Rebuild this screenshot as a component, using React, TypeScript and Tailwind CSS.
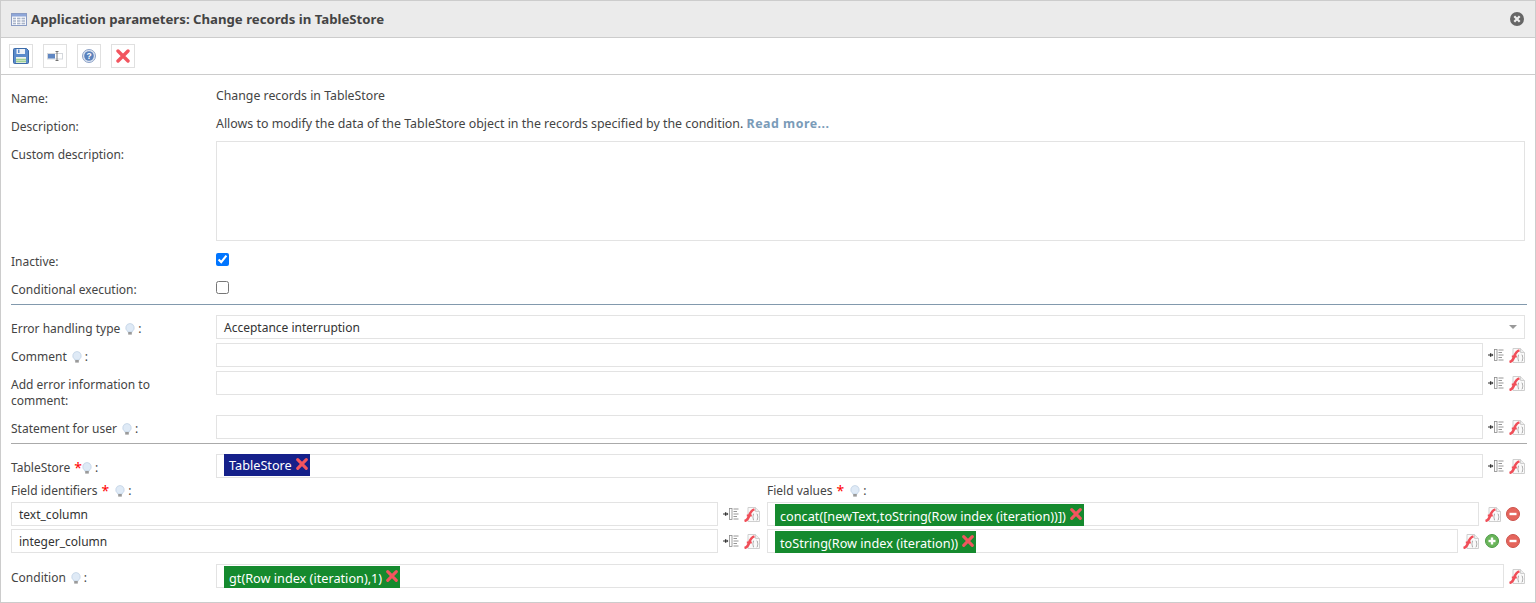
import React from "react";

function TableIcon() {
  return (
    <svg width="16" height="13" viewBox="0 0 16 13" className="shrink-0">
      <rect x="0.5" y="0.5" width="15" height="12" fill="#f4f6fb" stroke="#8a9cc4" />
      <rect x="1" y="1" width="14" height="2.5" fill="#8ea6d8" />
      <path d="M2 5.5h12M2 8h12M2 10.5h12" stroke="#a9b4c8" strokeWidth="1.4" />
      <path d="M5.5 4v8M10 4v8" stroke="#fff" strokeWidth="1" />
    </svg>
  );
}
function CloseIcon() {
  return (
    <svg width="14" height="14" viewBox="0 0 14 14">
      <circle cx="7" cy="7" r="7" fill="#666" />
      <path d="M4.3 4.3l5.4 5.4M9.7 4.3l-5.4 5.4" stroke="#eee" strokeWidth="2.2" />
    </svg>
  );
}
function SaveIcon() {
  return (
    <svg width="16" height="16" viewBox="0 0 16 16">
      <path d="M0.5 1.5a1 1 0 0 1 1-1h12l2 2v12a1 1 0 0 1-1 1h-13a1 1 0 0 1-1-1z" fill="#5b8bcb" stroke="#3c6ba8" />
      <rect x="3.5" y="1" width="8.5" height="5" fill="#eef2f8" />
      <rect x="5" y="1.5" width="1.5" height="3.5" fill="#5b8bcb" />
      <rect x="3" y="9" width="10" height="6" fill="#eef3ea" />
      <path d="M3 11.5h10M3 13.5h10" stroke="#9fd095" strokeWidth="1.3" />
    </svg>
  );
}
function FieldIcon() {
  return (
    <svg width="16" height="10" viewBox="0 0 16 10">
      <rect x="0.5" y="2.5" width="15" height="5.5" fill="#fff" stroke="#d5d8dc" />
      <rect x="1" y="3" width="7" height="4.5" fill="#5f86c2" />
      <path d="M8.5 0.5h3M8.5 9.5h3M10 0.5v9" stroke="#555" strokeWidth="0.8" />
    </svg>
  );
}
function HelpIcon() {
  return (
    <svg width="14" height="14" viewBox="0 0 14 14">
      <circle cx="7" cy="7" r="6.5" fill="#dfe6f2" stroke="#8da3c7" />
      <circle cx="7" cy="7" r="4.8" fill="#5a82bd" />
      <text x="7" y="10" textAnchor="middle" fontSize="8.5" fontWeight="700" fill="#fff" fontFamily="Liberation Sans, sans-serif">?</text>
    </svg>
  );
}
function RedX({ size = 14, w = 3.2 }: { size?: number; w?: number }) {
  return (
    <svg width={size} height={size} viewBox="0 0 14 14" className="shrink-0">
      <path d="M2 2l10 10M12 2L2 12" stroke="#f2555f" strokeWidth={w} strokeLinecap="round" />
    </svg>
  );
}
function Bulb() {
  return (
    <svg width="10" height="12" viewBox="0 0 10 12" className="shrink-0">
      <path d="M5 0.5a4.3 4.3 0 0 1 2.4 7.8V9H2.6v-.7A4.3 4.3 0 0 1 5 0.5z" fill="#dfeaf6" stroke="#bccfe2" strokeWidth="0.7" />
      <rect x="3.2" y="9" width="3.6" height="2.6" fill="#9a9a9a" />
    </svg>
  );
}
function InsertIcon() {
  return (
    <svg width="16" height="12" viewBox="0 0 16 12" className="shrink-0">
      <path d="M0 6h4M2.5 4.2v3.6" stroke="#333" strokeWidth="1.1" fill="none" />
      <path d="M3.6 4.2l1.8 1.8-1.8 1.8z" fill="#333" />
      <rect x="6.5" y="0.5" width="2.5" height="11" fill="#fff" stroke="#8b8b8b" strokeWidth="0.8" />
      <path d="M10.5 1h5M10.5 3.5h3.5M10.5 6h5M10.5 8.5h3.5M10.5 11h5" stroke="#8b8b8b" strokeWidth="0.9" />
    </svg>
  );
}
function FuncIcon() {
  return (
    <svg width="16" height="15" viewBox="0 0 16 15" className="shrink-0">
      <path d="M4 0.5h7.5l4 4v10h-11.5z" fill="#fafafa" stroke="#cfcfcf" />
      <path d="M11.5 0.5v4h4" fill="#eee" stroke="#cfcfcf" />
      <path d="M0.5 14C3.2 13.4 4.4 11.2 5.3 8.5 6.2 5.6 7.2 3.2 10.5 2.4" stroke="#f04e58" strokeWidth="2.5" fill="none" />
      <path d="M2.8 8.5h5" stroke="#f04e58" strokeWidth="2" />
      <path d="M10 6.5c-1 0-.5 3-1.3 3.5.8.5.3 3.5 1.3 3.5M12.7 6.5c1 0 .5 3 1.3 3.5-.8.5-.3 3.5-1.3 3.5" stroke="#9a9a9a" strokeWidth="0.8" fill="none" />
    </svg>
  );
}
function RoundIcon({ plus }: { plus?: boolean }) {
  const c = plus ? "#6ab55a" : "#e5655c";
  const e = plus ? "#4c9a46" : "#cc534c";
  return (
    <svg width="14" height="14" viewBox="0 0 14 14" className="shrink-0">
      <circle cx="7" cy="7" r="6.5" fill={c} stroke={e} />
      <path d="M3.5 7h7" stroke="#fff" strokeWidth="2.4" />
      {plus && <path d="M7 3.5v7" stroke="#fff" strokeWidth="2.4" />}
    </svg>
  );
}

function Tag({ children, color, offset, text = "pt-[1px]" }: { children: React.ReactNode; color: string; offset: string; text?: string }) {
  return (
    <span className={`flex h-[22px] items-center gap-[4px] pl-[5px] pr-[2px] text-[12.7px] text-white ${color} ${offset}`}>
      <span className={`whitespace-nowrap ${text}`}>{children}</span>
      <span className="-mt-[2px] flex"><RedX size={12} w={3.6} /></span>
    </span>
  );
}

function Box({ children, className = "" }: { children?: React.ReactNode; className?: string }) {
  return (
    <div className={`flex h-[24px] min-w-0 flex-1 border border-[#e3e3e3] bg-white pl-[7px] text-[#333] ${className}`}>
      {children}
    </div>
  );
}

function Tools({ insert = true }: { insert?: boolean }) {
  return (
    <div className="ml-[5px] flex h-[24px] shrink-0 items-center gap-[5px]">
      {insert && <InsertIcon />}
      <FuncIcon />
    </div>
  );
}

function Label({ children, star, after = "mr-[6px]" }: { children: React.ReactNode; star?: boolean; after?: string }) {
  return (
    <span className="flex items-center text-[#444]">
      {children}
      {star ? (
        <span className={`ml-[4px] text-[14px] leading-[16px] text-[#f00] ${after}`}>*</span>
      ) : (
        <span className="w-[5px]" />
      )}
      <Bulb />
      <span className="ml-[3px]">:</span>
    </span>
  );
}

function FieldRow({ label, children, className = "" }: { label: React.ReactNode; children: React.ReactNode; className?: string }) {
  return (
    <div className={`flex items-start ${className}`}>
      <div className="flex w-[205px] shrink-0 pt-[6px]">{label}</div>
      {children}
    </div>
  );
}

export default function App() {
  return (
    <div className="flex h-[603px] w-[1536px] flex-col overflow-hidden border border-[#ccc] bg-white font-['Noto_Sans',_sans-serif] text-[12px] leading-[16px] text-[#444]">
      <div className="flex h-[37px] shrink-0 items-center justify-between border-b border-[#ccc] bg-[#ebebeb] pl-[10px] pr-[11px]">
        <div className="flex items-center gap-[4px]">
          <TableIcon />
          <span className="text-[13.2px] font-bold text-[#444]">Application parameters: Change records in TableStore</span>
        </div>
        <CloseIcon />
      </div>
      <div className="flex h-[37px] shrink-0 items-center gap-[10px] border-b border-[#ccc] pl-[8px]">
        <button className="flex h-[24px] w-[24px] items-center justify-center border border-[#e0e0e0]"><SaveIcon /></button>
        <button className="flex h-[24px] w-[24px] items-center justify-center border border-[#e0e0e0]"><FieldIcon /></button>
        <button className="flex h-[24px] w-[24px] items-center justify-center border border-[#e0e0e0]"><HelpIcon /></button>
        <button className="flex h-[24px] w-[24px] items-center justify-center border border-[#e0e0e0]"><RedX size={14} w={3.4} /></button>
      </div>

      <div className="flex flex-col pl-[10px] pr-[10px]">
        <div className="flex h-[28px] items-start pt-[16px]">
          <span className="w-[205px] shrink-0">Name:</span>
          <span className="-mt-[3px] text-[12.3px]">Change records in TableStore</span>
        </div>
        <div className="flex h-[28px] items-start pt-[16px]">
          <span className="w-[205px] shrink-0">Description:</span>
          <span className="-mt-[3px] text-[12.4px]">
            Allows to modify the data of the TableStore object in the records specified by the condition.{" "}
            <span className="font-bold tracking-[0.5px] text-[#7a9bb8]">Read more...</span>
          </span>
        </div>
        <div className="mt-[10px] flex items-start">
          <span className="w-[205px] shrink-0 pt-[6px]">Custom description:</span>
          <div className="h-[100px] flex-1 border border-[#e3e3e3]" />
        </div>
        <div className="mt-[12px] flex h-[16px] items-start">
          <span className="w-[205px] shrink-0 pt-[1px]">Inactive:</span>
          <input type="checkbox" defaultChecked className="m-0 h-[13px] w-[13px]" />
        </div>
        <div className="mt-[12px] flex h-[16px] items-start">
          <span className="w-[205px] shrink-0 pt-[1px]">Conditional execution:</span>
          <input type="checkbox" className="m-0 h-[13px] w-[13px]" />
        </div>
        <div className="-mr-[2px] mt-[7px] h-px bg-[#8299ad]" />

        <FieldRow label={<Label>Error handling type</Label>} className="mt-[10px]">
          <Box className="items-center justify-between pr-[7px]">
            <span className="pt-[2px]">Acceptance interruption</span>
            <span className="h-0 w-0 border-x-[4px] border-t-[4px] border-x-transparent border-t-[#999]" />
          </Box>
        </FieldRow>
        <FieldRow label={<Label>Comment</Label>} className="mt-[4px]">
          <Box />
          <Tools />
        </FieldRow>
        <FieldRow label={<span className="w-[150px] text-[#444]">Add error information to comment:</span>} className="mt-[4px]">
          <Box />
          <Tools />
        </FieldRow>
        <FieldRow label={<Label>Statement for user</Label>} className="mt-[6px]">
          <Box />
          <Tools />
        </FieldRow>
        <div className="-mr-[2px] mt-[4px] h-px bg-[#aaa]" />

        <FieldRow label={<Label star after="mr-0">TableStore</Label>} className="mt-[10px]">
          <Box><Tag color="bg-[#15208a]" offset="-mt-[1px]" text="">TableStore</Tag></Box>
          <Tools />
        </FieldRow>

        <div className="flex pb-[3px] pt-[5px]">
          <div className="w-[756px] shrink-0"><Label star>Field identifiers</Label></div>
          <Label star>Field values</Label>
        </div>

        <div className="flex items-start">
          <div className="flex w-[707px] shrink-0"><Box className="items-center"><span className="pt-[2px]">text_column</span></Box></div>
          <div className="flex w-[49px] shrink-0"><Tools /></div>
          <Box><Tag color="bg-[#158a2e]" offset="mt-[1px]">concat([newText,toString(Row index (iteration))])</Tag></Box>
          <div className="ml-[6px] flex h-[24px] w-[40px] shrink-0 items-center gap-[5px]"><FuncIcon /><RoundIcon /></div>
        </div>
        <div className="mt-[3px] flex items-start">
          <div className="flex w-[707px] shrink-0"><Box className="items-center"><span className="pt-[2px]">integer_column</span></Box></div>
          <div className="flex w-[49px] shrink-0"><Tools /></div>
          <Box><Tag color="bg-[#158a2e]" offset="mt-[1px]">toString(Row index (iteration))</Tag></Box>
          <div className="ml-[5px] flex h-[24px] w-[62px] shrink-0 items-center"><FuncIcon /><span className="ml-[6px] flex"><RoundIcon plus /></span><span className="ml-[7px] flex"><RoundIcon /></span></div>
        </div>

        <FieldRow label={<Label>Condition</Label>} className="mt-[11px]">
          <Box><Tag color="bg-[#158a2e]" offset="mt-[1px]">gt(Row index (iteration),1)</Tag></Box>
          <Tools insert={false} />
        </FieldRow>
      </div>
    </div>
  );
}
